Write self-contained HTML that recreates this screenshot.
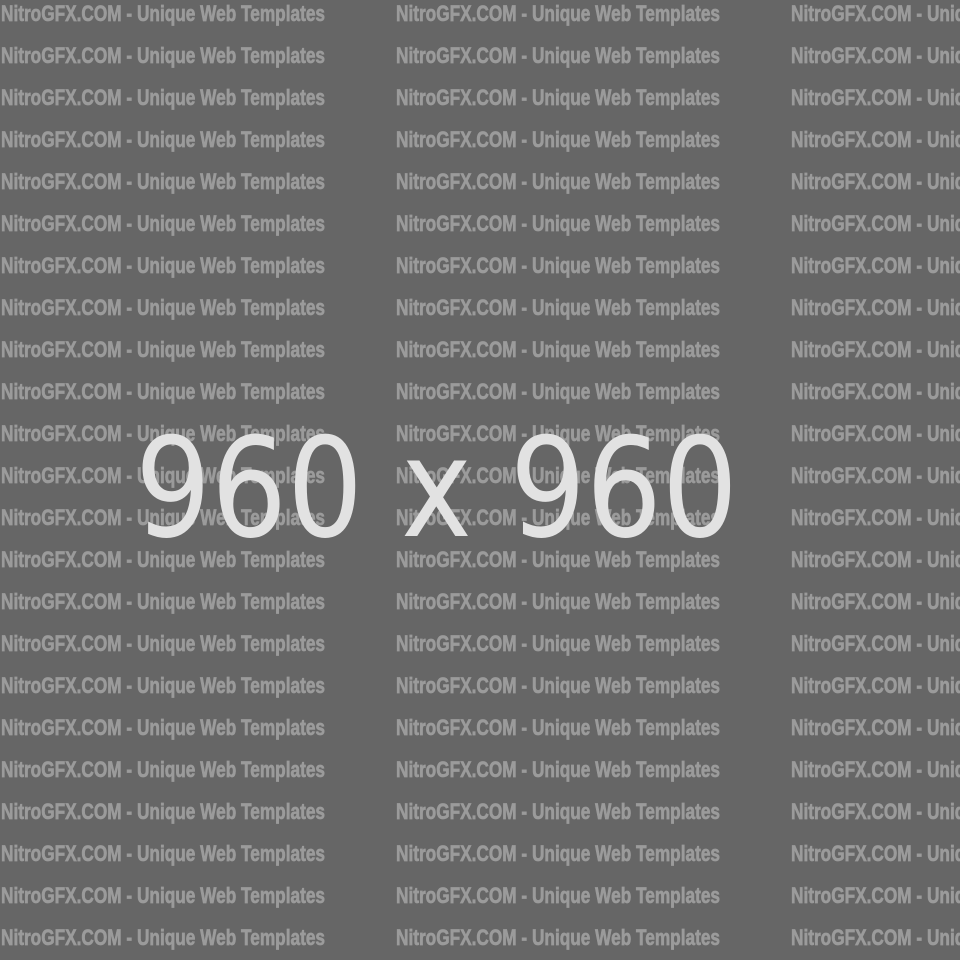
<!DOCTYPE html>
<html><head><meta charset="utf-8"><style>
html,body{margin:0;padding:0;background:#666;width:960px;height:960px;overflow:hidden}
svg{display:block}
</style></head><body>
<svg width="960" height="960" xmlns="http://www.w3.org/2000/svg">
<rect width="960" height="960" fill="#666"/>
<g id="rows" fill="#9b9b9b" stroke="#9b9b9b" stroke-width="0.7" font-family="Liberation Sans, sans-serif" font-weight="bold" font-size="22"></g>
<text id="big" x="135" y="536" fill="#e2e2e2" font-family="DejaVu Sans, sans-serif" font-size="138" textLength="603" lengthAdjust="spacingAndGlyphs">960 x 960</text>
</svg>
<script>
var g=document.getElementById('rows'),ns='http://www.w3.org/2000/svg';
for(var r=0;r<23;r++){for(var c=0;c<3;c++){var t=document.createElementNS(ns,'text');
t.setAttribute('x',c*395+1);t.setAttribute('y',21+r*42);
t.setAttribute('textLength','324');t.setAttribute('lengthAdjust','spacingAndGlyphs');
t.textContent='NitroGFX.COM - Unique Web Templates';g.appendChild(t);}}
</script>
</body></html>
